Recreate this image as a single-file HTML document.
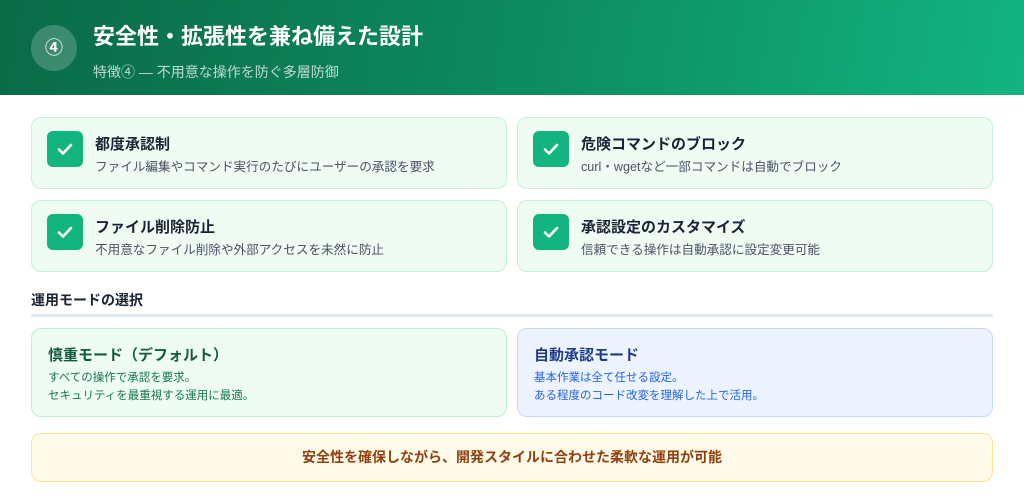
<!DOCTYPE html><html><head><meta charset="utf-8"><style>
*{margin:0;padding:0;box-sizing:border-box}
body{width:1024px;height:503px;background:#fff;font-family:"Liberation Sans","Noto Sans CJK JP",sans-serif;position:relative;overflow:hidden}
.hd{position:absolute;left:0;top:0;width:1024px;height:95px;background:linear-gradient(100deg,#0a6a48 0%,#0d8a5f 50%,#12b480 100%)}
.circ{position:absolute;left:31px;top:25px;width:46px;height:46px;border-radius:50%;background:rgba(255,255,255,.2);color:#fff;font-size:18px;font-weight:bold;text-align:center;line-height:46px}
.t1{position:absolute;left:93px;top:19px;color:#fff;font-size:22px;font-weight:bold}
.t2{position:absolute;left:93px;top:62px;color:rgba(255,255,255,.72);font-size:14px}
.card{position:absolute;width:476px;height:72px;border:1.5px solid #c5f2d6;background:#effcf4;border-radius:10px}
.chk{position:absolute;left:15px;top:13px;width:36px;height:36px;border-radius:6px;background:#12b47f}
.chk svg{position:absolute;left:9px;top:9px}
.ct{position:absolute;left:63px;top:15px;font-size:15px;font-weight:bold;color:#1b2433}
.cd{position:absolute;left:63px;top:38px;font-size:12.6px;color:#4a5363}
.sec{position:absolute;left:31px;top:290px;font-size:14px;font-weight:bold;color:#1b2433}
.line{position:absolute;left:31px;top:314px;width:962px;height:3px;background:#e1e8f2}
.mode{position:absolute;top:328px;width:476px;height:89px;border-radius:10px;border:1.5px solid}
.mt{position:absolute;left:16px;top:15px;font-size:15px;font-weight:bold}
.md{position:absolute;left:16px;top:41px;font-size:11.5px;line-height:17.5px}
.ban{position:absolute;left:31px;top:433px;width:962px;height:49px;border:1.5px solid #fce38a;background:#fffbea;border-radius:10px;text-align:center;line-height:46px;font-size:14px;font-weight:bold;color:#92400e}
</style></head><body>
<div class="hd"><div class="circ">④</div><div class="t1">安全性・拡張性を兼ね備えた設計</div><div class="t2">特徴④ — 不用意な操作を防ぐ多層防御</div></div>
<div class="card" style="left:31px;top:117px"><div class="chk"><svg width="18" height="18" viewBox="0 0 18 18"><path d="M3 9.5l4 4 8-8.5" stroke="#fff" stroke-width="2.6" fill="none" stroke-linecap="round" stroke-linejoin="round"/></svg></div><div class="ct">都度承認制</div><div class="cd">ファイル編集やコマンド実行のたびにユーザーの承認を要求</div></div>
<div class="card" style="left:517px;top:117px"><div class="chk"><svg width="18" height="18" viewBox="0 0 18 18"><path d="M3 9.5l4 4 8-8.5" stroke="#fff" stroke-width="2.6" fill="none" stroke-linecap="round" stroke-linejoin="round"/></svg></div><div class="ct">危険コマンドのブロック</div><div class="cd">curl・wgetなど一部コマンドは自動でブロック</div></div>
<div class="card" style="left:31px;top:200px"><div class="chk"><svg width="18" height="18" viewBox="0 0 18 18"><path d="M3 9.5l4 4 8-8.5" stroke="#fff" stroke-width="2.6" fill="none" stroke-linecap="round" stroke-linejoin="round"/></svg></div><div class="ct">ファイル削除防止</div><div class="cd">不用意なファイル削除や外部アクセスを未然に防止</div></div>
<div class="card" style="left:517px;top:200px"><div class="chk"><svg width="18" height="18" viewBox="0 0 18 18"><path d="M3 9.5l4 4 8-8.5" stroke="#fff" stroke-width="2.6" fill="none" stroke-linecap="round" stroke-linejoin="round"/></svg></div><div class="ct">承認設定のカスタマイズ</div><div class="cd">信頼できる操作は自動承認に設定変更可能</div></div>
<div class="sec">運用モードの選択</div><div class="line"></div>
<div class="mode" style="left:31px;background:#effcf4;border-color:#bdf0cf"><div class="mt" style="color:#0f5b3c">慎重モード（デフォルト）</div><div class="md" style="color:#16774d">すべての操作で承認を要求。<br>セキュリティを最重視する運用に最適。</div></div>
<div class="mode" style="left:517px;background:#eef4ff;border-color:#c3d8fb"><div class="mt" style="color:#1e3a8a">自動承認モード</div><div class="md" style="color:#2563eb">基本作業は全て任せる設定。<br>ある程度のコード改変を理解した上で活用。</div></div>
<div class="ban">安全性を確保しながら、開発スタイルに合わせた柔軟な運用が可能</div>
</body></html>
